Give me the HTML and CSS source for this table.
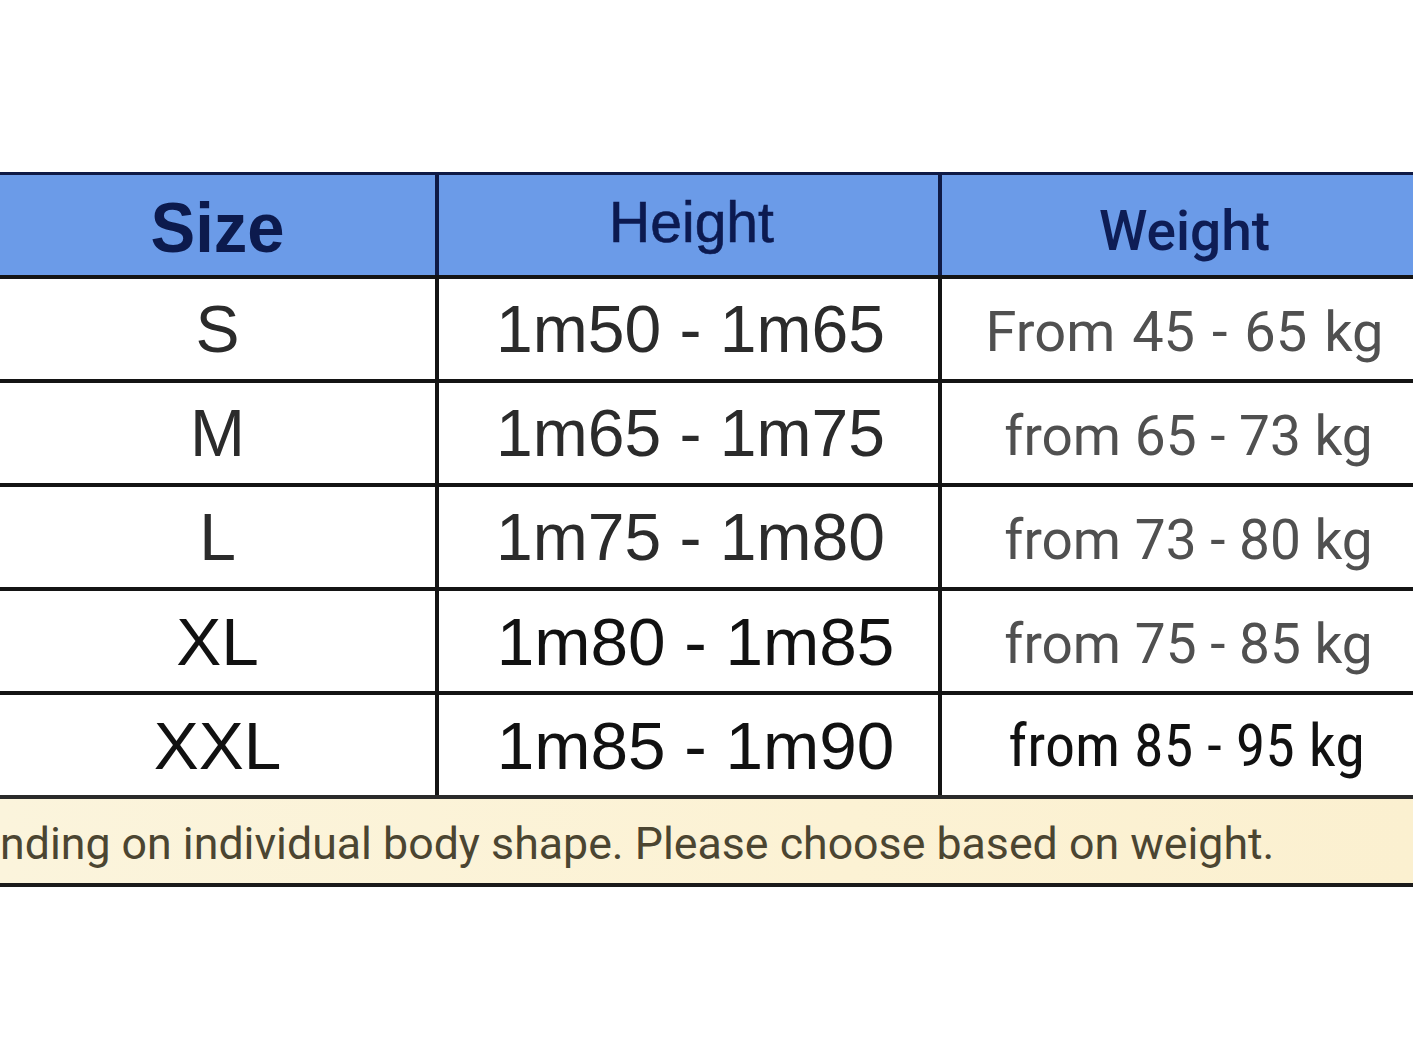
FILE: index.html
```html
<!DOCTYPE html>
<html lang="en">
<head>
<meta charset="utf-8">
<title>Size chart</title>
<link rel="stylesheet" href="styles.css">
</head>
<body>
<div class="page">
  <div class="chart">
    <div class="row head">
      <div class="cell c1"><span class="h-size">Size</span></div>
      <div class="cell c2"><span class="h-height">Height</span></div>
      <div class="cell c3"><span class="h-weight">Weight</span></div>
    </div>
    <div class="row">
      <div class="cell c1 v-size">S</div>
      <div class="cell c2 v-height">1m50 - 1m65</div>
      <div class="cell c3 v-weight wide">From 45 - 65 kg</div>
    </div>
    <div class="row">
      <div class="cell c1 v-size">M</div>
      <div class="cell c2 v-height">1m65 - 1m75</div>
      <div class="cell c3 v-weight">from 65 - 73 kg</div>
    </div>
    <div class="row">
      <div class="cell c1 v-size">L</div>
      <div class="cell c2 v-height">1m75 - 1m80</div>
      <div class="cell c3 v-weight">from 73 - 80 kg</div>
    </div>
    <div class="row">
      <div class="cell c1 v-size dark">XL</div>
      <div class="cell c2 v-height dark">1m80 - 1m85</div>
      <div class="cell c3 v-weight">from 75 - 85 kg</div>
    </div>
    <div class="row">
      <div class="cell c1 v-size dark">XXL</div>
      <div class="cell c2 v-height dark">1m85 - 1m90</div>
      <div class="cell c3 v-weight narrow">from 85 - 95 kg</div>
    </div>
    <div class="note">nding on individual body shape. Please choose based on weight.</div>
  </div>
</div>
</body>
</html>
```
FILE: styles.css
```css
html, body {
  margin: 0;
  padding: 0;
  background: #ffffff;
}

.page {
  width: 1413px;
  height: 1060px;
  overflow: hidden;
  padding-top: 172px;
  box-sizing: border-box;
}

.chart {
  display: flex;
  flex-direction: column;
  width: 1413px;
}

.row {
  display: flex;
  height: 100px;
  border-top: 4px solid #141414;
}

.row.head {
  background: #6b9be8;
  border-top: 3px solid #0f1a45;
}

.cell {
  display: flex;
  align-items: center;
  justify-content: center;
  box-sizing: border-box;
  white-space: nowrap;
}

.c1 {
  width: 435px;
}

.c2 {
  width: 503px;
  border-left: 4px solid #141414;
}

.c3 {
  flex: 1;
  border-left: 4px solid #141414;
}

.head .c2, .head .c3 {
  border-left-color: #0f1a45;
}

.h-size {
  font-family: "Liberation Sans", Arial, sans-serif;
  font-weight: 700;
  font-size: 67px;
  color: #0c1a4d;
  margin-top: 4px;
  display: inline-block;
  transform: scaleY(1.05);
}

.h-height {
  font-family: "Liberation Sans", Arial, sans-serif;
  font-size: 57px;
  color: #0c1a50;
  margin-top: -6px;
  margin-left: 6px;
  -webkit-text-stroke: 0.6px #0c1a50;
}

.h-weight {
  font-family: Roboto, "Noto Sans", sans-serif;
  font-weight: 500;
  font-size: 55px;
  color: #0e1d55;
  margin-top: 12px;
  margin-left: 14px;
}

.v-size, .v-height {
  font-family: "Liberation Sans", Arial, sans-serif;
  font-size: 66px;
  color: #2b2b2b;
}

.v-size.dark, .v-height.dark {
  color: #111111;
  font-size: 67.5px;
}

.v-height {
  padding-left: 4px;
}

.v-height.dark {
  padding-left: 14px;
}

.v-weight {
  font-family: Roboto, "Noto Sans", sans-serif;
  font-size: 55px;
  color: #505050;
  padding-top: 6px;
  padding-left: 22px;
}

.v-weight.wide {
  font-size: 56px;
  word-spacing: 3px;
  padding-left: 14px;
}

.v-weight.narrow {
  font-family: "Liberation Sans Narrow", "Roboto Condensed", Roboto, sans-serif;
  font-size: 60px;
  color: #111111;
  padding-top: 0;
  padding-left: 18px;
}

.note {
  border-top: 4px solid #2a2a2a;
  border-bottom: 4px solid #1a1a1a;
  background: linear-gradient(90deg, #fbf4dc 0%, #fcf2d4 60%, #fbf0d0 100%);
  font-family: Roboto, "Noto Sans", sans-serif;
  font-size: 44.7px;
  color: #4b4531;
  display: flex;
  align-items: center;
  padding-top: 6px;
  height: 78px;
  white-space: nowrap;
}
```
